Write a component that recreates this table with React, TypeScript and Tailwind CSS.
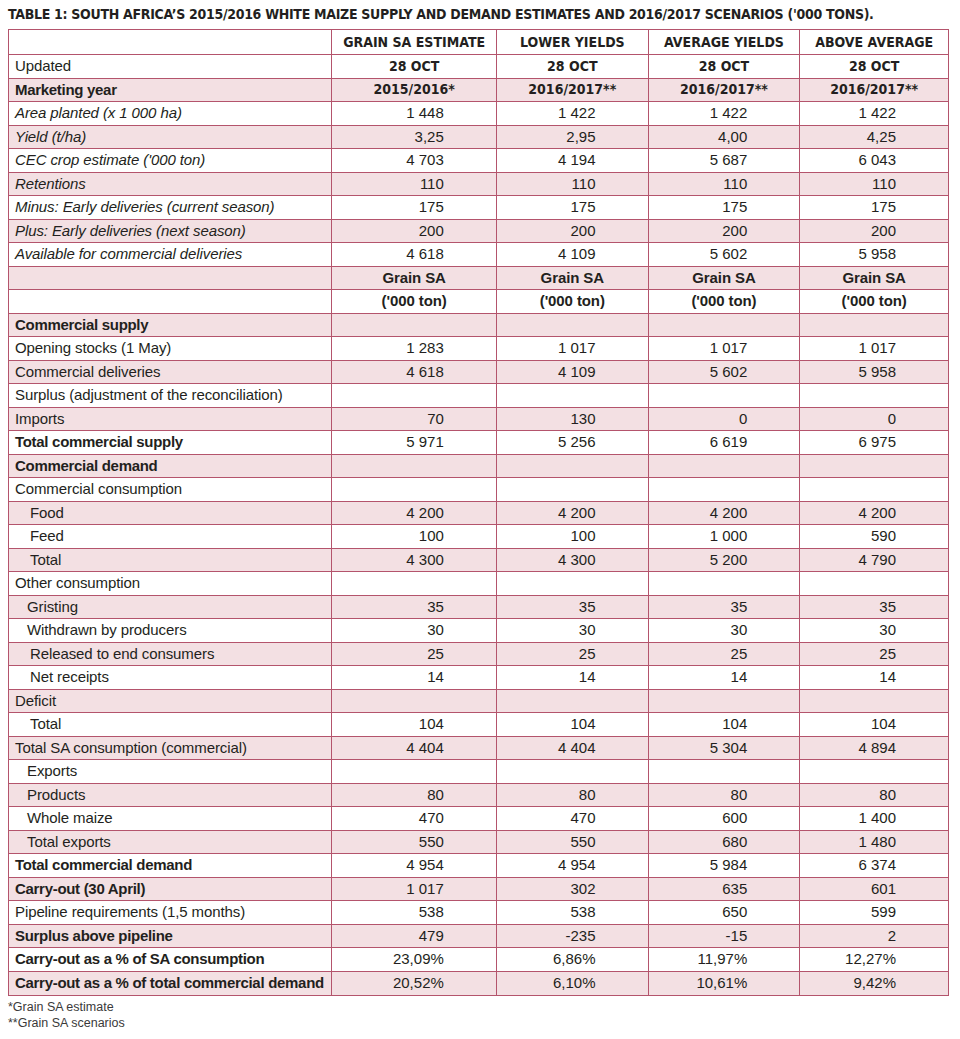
import React from "react";

type Row = {
  label: string;
  vals?: string[];
  kind?: "bold" | "italic" | "normal";
  indent?: 0 | 1 | 2;
  valKind?: "cond" | "bold" | "normal";
  center?: boolean;
};

const rows: Row[] = [
  { label: "Updated", vals: ["28 OCT", "28 OCT", "28 OCT", "28 OCT"], valKind: "cond", center: true },
  { label: "Marketing year", kind: "bold", vals: ["2015/2016*", "2016/2017**", "2016/2017**", "2016/2017**"], valKind: "cond", center: true },
  { label: "Area planted (x 1 000 ha)", kind: "italic", vals: ["1 448", "1 422", "1 422", "1 422"] },
  { label: "Yield (t/ha)", kind: "italic", vals: ["3,25", "2,95", "4,00", "4,25"] },
  { label: "CEC crop estimate ('000 ton)", kind: "italic", vals: ["4 703", "4 194", "5 687", "6 043"] },
  { label: "Retentions", kind: "italic", vals: ["110", "110", "110", "110"] },
  { label: "Minus: Early deliveries (current season)", kind: "italic", vals: ["175", "175", "175", "175"] },
  { label: "Plus: Early deliveries (next season)", kind: "italic", vals: ["200", "200", "200", "200"] },
  { label: "Available for commercial deliveries", kind: "italic", vals: ["4 618", "4 109", "5 602", "5 958"] },
  { label: "", vals: ["Grain SA", "Grain SA", "Grain SA", "Grain SA"], valKind: "bold", center: true },
  { label: "", vals: ["('000 ton)", "('000 ton)", "('000 ton)", "('000 ton)"], valKind: "bold", center: true },
  { label: "Commercial supply", kind: "bold" },
  { label: "Opening stocks (1 May)", vals: ["1 283", "1 017", "1 017", "1 017"] },
  { label: "Commercial deliveries", vals: ["4 618", "4 109", "5 602", "5 958"] },
  { label: "Surplus (adjustment of the reconciliation)" },
  { label: "Imports", vals: ["70", "130", "0", "0"] },
  { label: "Total commercial supply", kind: "bold", vals: ["5 971", "5 256", "6 619", "6 975"] },
  { label: "Commercial demand", kind: "bold" },
  { label: "Commercial consumption" },
  { label: "Food", indent: 2, vals: ["4 200", "4 200", "4 200", "4 200"] },
  { label: "Feed", indent: 2, vals: ["100", "100", "1 000", "590"] },
  { label: "Total", indent: 2, vals: ["4 300", "4 300", "5 200", "4 790"] },
  { label: "Other consumption" },
  { label: "Gristing", indent: 1, vals: ["35", "35", "35", "35"] },
  { label: "Withdrawn by producers", indent: 1, vals: ["30", "30", "30", "30"] },
  { label: "Released to end consumers", indent: 2, vals: ["25", "25", "25", "25"] },
  { label: "Net receipts", indent: 2, vals: ["14", "14", "14", "14"] },
  { label: "Deficit" },
  { label: "Total", indent: 2, vals: ["104", "104", "104", "104"] },
  { label: "Total SA consumption (commercial)", vals: ["4 404", "4 404", "5 304", "4 894"] },
  { label: "Exports", indent: 1 },
  { label: "Products", indent: 1, vals: ["80", "80", "80", "80"] },
  { label: "Whole maize", indent: 1, vals: ["470", "470", "600", "1 400"] },
  { label: "Total exports", indent: 1, vals: ["550", "550", "680", "1 480"] },
  { label: "Total commercial demand", kind: "bold", vals: ["4 954", "4 954", "5 984", "6 374"] },
  { label: "Carry-out (30 April)", kind: "bold", vals: ["1 017", "302", "635", "601"] },
  { label: "Pipeline requirements (1,5 months)", vals: ["538", "538", "650", "599"] },
  { label: "Surplus above pipeline", kind: "bold", vals: ["479", "-235", "-15", "2"] },
  { label: "Carry-out as a % of SA consumption", kind: "bold", vals: ["23,09%", "6,86%", "11,97%", "12,27%"] },
  { label: "Carry-out as a % of total commercial demand", kind: "bold", vals: ["20,52%", "6,10%", "10,61%", "9,42%"] },
];

const colW = ["w-[324px]", "w-[165px]", "w-[152px]", "w-[152px]", "w-[148px]"];
const cond = "[font-family:'DejaVu_Sans_Condensed','Liberation_Sans_Narrow','Arial_Narrow',sans-serif] [font-stretch:condensed]";

export default function App() {
  return (
    <div className="w-[960px] h-[1039px] bg-white text-[#231f20] [font-family:'Liberation_Sans',Arial,sans-serif]">
      <div className={`pt-[5px] pl-2 h-[29px] text-[14px] leading-[18px] tracking-[-0.3px] font-bold whitespace-nowrap ${cond}`}>
        TABLE 1: SOUTH AFRICA’S 2015/2016 WHITE MAIZE SUPPLY AND DEMAND ESTIMATES AND 2016/2017 SCENARIOS ('000 TONS).
      </div>
      <div className="ml-2 w-[941px] border border-[#b4546c]">
        <div className="flex h-[25px] border-b border-[#b4546c]">
          {["", "GRAIN SA ESTIMATE", "LOWER YIELDS", "AVERAGE YIELDS", "ABOVE AVERAGE"].map((h, i) => (
            <div
              key={i}
              className={`${colW[i]} ${i < 4 ? "border-r border-[#b4546c]" : ""} flex items-center justify-center text-[14px] font-bold whitespace-nowrap ${cond}`}
            >
              {h}
            </div>
          ))}
        </div>
        {rows.map((r, ri) => {
          const pink = ri % 2 === 1;
          const last = ri === rows.length - 1;
          const lk =
            r.kind === "bold"
              ? "font-bold tracking-[-0.3px]"
              : r.kind === "italic"
              ? "italic tracking-[-0.1px]"
              : "tracking-[-0.1px]";
          const pad = r.indent === 2 ? "pl-[21px]" : r.indent === 1 ? "pl-[18px]" : "pl-[6px]";
          return (
            <div
              key={ri}
              className={`flex h-[23.5px] ${last ? "" : "border-b border-[#b4546c]"} ${pink ? "bg-[#f3e0e3]" : "bg-white"}`}
            >
              <div className={`${colW[0]} border-r border-[#b4546c] flex items-center ${pad} text-[15px] ${lk} whitespace-nowrap`}>
                {r.label}
              </div>
              {[0, 1, 2, 3].map((c) => {
                const v = r.vals ? r.vals[c] : "";
                const vk =
                  r.valKind === "cond"
                    ? `font-bold text-[14px] ${cond}`
                    : r.valKind === "bold"
                    ? "font-bold text-[15px] tracking-[-0.1px]"
                    : "text-[15px]";
                return (
                  <div
                    key={c}
                    className={`${colW[c + 1]} ${c < 3 ? "border-r border-[#b4546c]" : ""} flex items-center ${r.center ? "justify-center" : "justify-end pr-[52px]"} ${vk} whitespace-nowrap`}
                  >
                    {v}
                  </div>
                );
              })}
            </div>
          );
        })}
      </div>
      <div className="pl-2 pt-[3px] text-[12.5px] leading-[16px] text-[#3a3a3a]">
        <div>*Grain SA estimate</div>
        <div>**Grain SA scenarios</div>
      </div>
    </div>
  );
}
